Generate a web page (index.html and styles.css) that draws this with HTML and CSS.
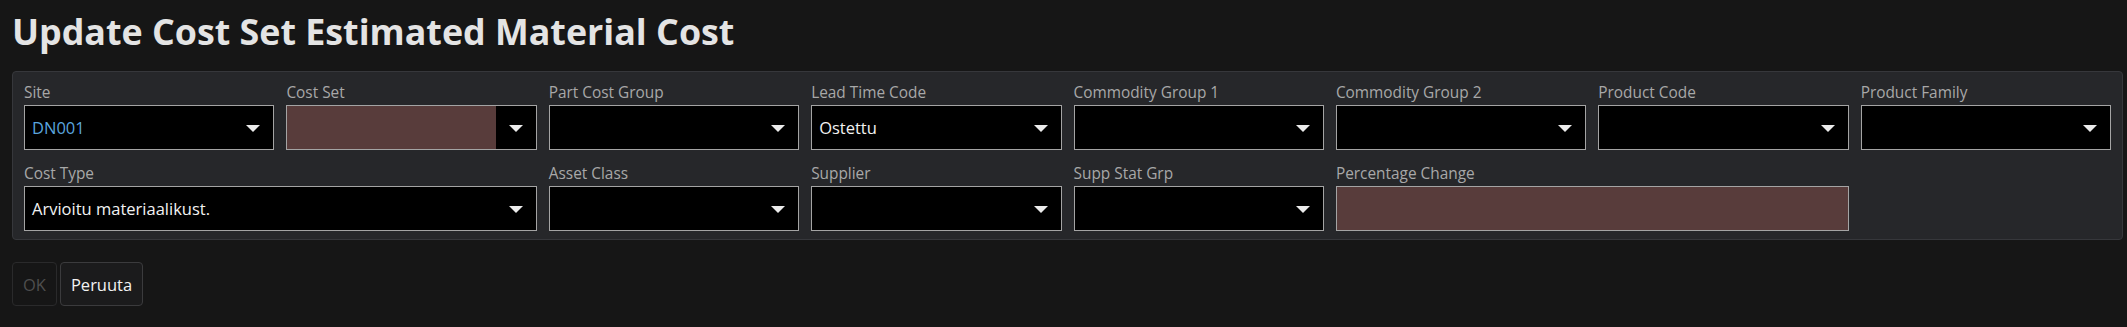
FILE: index.html
```html
<!DOCTYPE html>
<html lang="en">
<head>
<meta charset="utf-8">
<title>Update Cost Set Estimated Material Cost</title>
<link rel="stylesheet" href="styles.css">
</head>
<body>
<div class="page">
  <h1 class="title">Update Cost Set Estimated Material Cost</h1>
  <div class="panel">
    <div class="grid">
      <div class="field">
        <label class="label">Site</label>
        <div class="box"><span class="value link">DN001</span><span class="drop"><span class="tri"></span></span></div>
      </div>
      <div class="field">
        <label class="label">Cost Set</label>
        <div class="box"><span class="value required"></span><span class="drop"><span class="tri"></span></span></div>
      </div>
      <div class="field">
        <label class="label">Part Cost Group</label>
        <div class="box"><span class="value"></span><span class="drop"><span class="tri"></span></span></div>
      </div>
      <div class="field">
        <label class="label">Lead Time Code</label>
        <div class="box"><span class="value">Ostettu</span><span class="drop"><span class="tri"></span></span></div>
      </div>
      <div class="field">
        <label class="label">Commodity Group 1</label>
        <div class="box"><span class="value"></span><span class="drop"><span class="tri"></span></span></div>
      </div>
      <div class="field">
        <label class="label">Commodity Group 2</label>
        <div class="box"><span class="value"></span><span class="drop"><span class="tri"></span></span></div>
      </div>
      <div class="field">
        <label class="label">Product Code</label>
        <div class="box"><span class="value"></span><span class="drop"><span class="tri"></span></span></div>
      </div>
      <div class="field">
        <label class="label">Product Family</label>
        <div class="box"><span class="value"></span><span class="drop"><span class="tri"></span></span></div>
      </div>

      <div class="field span2">
        <label class="label">Cost Type</label>
        <div class="box"><span class="value">Arvioitu materiaalikust.</span><span class="drop"><span class="tri"></span></span></div>
      </div>
      <div class="field">
        <label class="label">Asset Class</label>
        <div class="box"><span class="value"></span><span class="drop"><span class="tri"></span></span></div>
      </div>
      <div class="field">
        <label class="label">Supplier</label>
        <div class="box"><span class="value"></span><span class="drop"><span class="tri"></span></span></div>
      </div>
      <div class="field">
        <label class="label">Supp Stat Grp</label>
        <div class="box"><span class="value"></span><span class="drop"><span class="tri"></span></span></div>
      </div>
      <div class="field span2">
        <label class="label">Percentage Change</label>
        <div class="box"><span class="value required"></span></div>
      </div>
    </div>
  </div>
  <div class="actions">
    <button class="btn disabled" type="button">OK</button>
    <button class="btn" type="button">Peruuta</button>
  </div>
</div>
</body>
</html>
```

FILE: styles.css
```css
html, body {
  margin: 0;
  padding: 0;
  background: #161616;
  height: 100%;
}

body {
  font-family: "Open Sans", "Noto Sans", sans-serif;
  color: #e6e6e6;
}

.page {
  padding: 0 4px 0 12px;
}

.title {
  margin: 0;
  padding-top: 7px;
  font-size: 35.8px;
  line-height: 48px;
  font-weight: 700;
  color: #e4e4e4;
}

.panel {
  margin-top: 16px;
  background: #26272a;
  border: 1px solid #36373b;
  border-radius: 4px;
  padding: 11px 11px 8px 11px;
}

.grid {
  display: grid;
  grid-template-columns: repeat(8, 1fr);
  column-gap: 12px;
  row-gap: 14px;
}

.field {
  display: flex;
  flex-direction: column;
  min-width: 0;
}

.span2 {
  grid-column: span 2;
}

.label {
  font-size: 15.4px;
  line-height: 20px;
  color: #a8a8a8;
  margin-bottom: 2px;
  white-space: nowrap;
}

.box {
  display: flex;
  height: 45px;
  box-sizing: border-box;
  border: 1px solid #a4a4a4;
  background: #000;
}

.value {
  flex: 1;
  min-width: 0;
  padding: 0 7px;
  font-size: 16.5px;
  line-height: 43px;
  color: #f2f2f2;
  white-space: nowrap;
  overflow: hidden;
}

.value.link {
  color: #5aa5de;
}

.value.required {
  background: #583c3b;
}

.drop {
  width: 40px;
  display: flex;
  align-items: center;
  justify-content: center;
}

.tri {
  width: 0;
  height: 0;
  border-left: 7px solid transparent;
  border-right: 7px solid transparent;
  border-top: 7px solid #ececec;
  margin-top: 1px;
}

.actions {
  display: flex;
  gap: 3px;
  margin-top: 22px;
}

.btn {
  height: 44px;
  padding: 0 10px;
  font-family: "Open Sans", "Noto Sans", sans-serif;
  font-size: 16.5px;
  color: #f2f2f2;
  background: #1b1b1c;
  border: 1px solid #3b3b3d;
  border-radius: 4px;
}

.btn.disabled {
  color: #4e4e4e;
  background: #161616;
  border-color: #2a2a2b;
}
```
